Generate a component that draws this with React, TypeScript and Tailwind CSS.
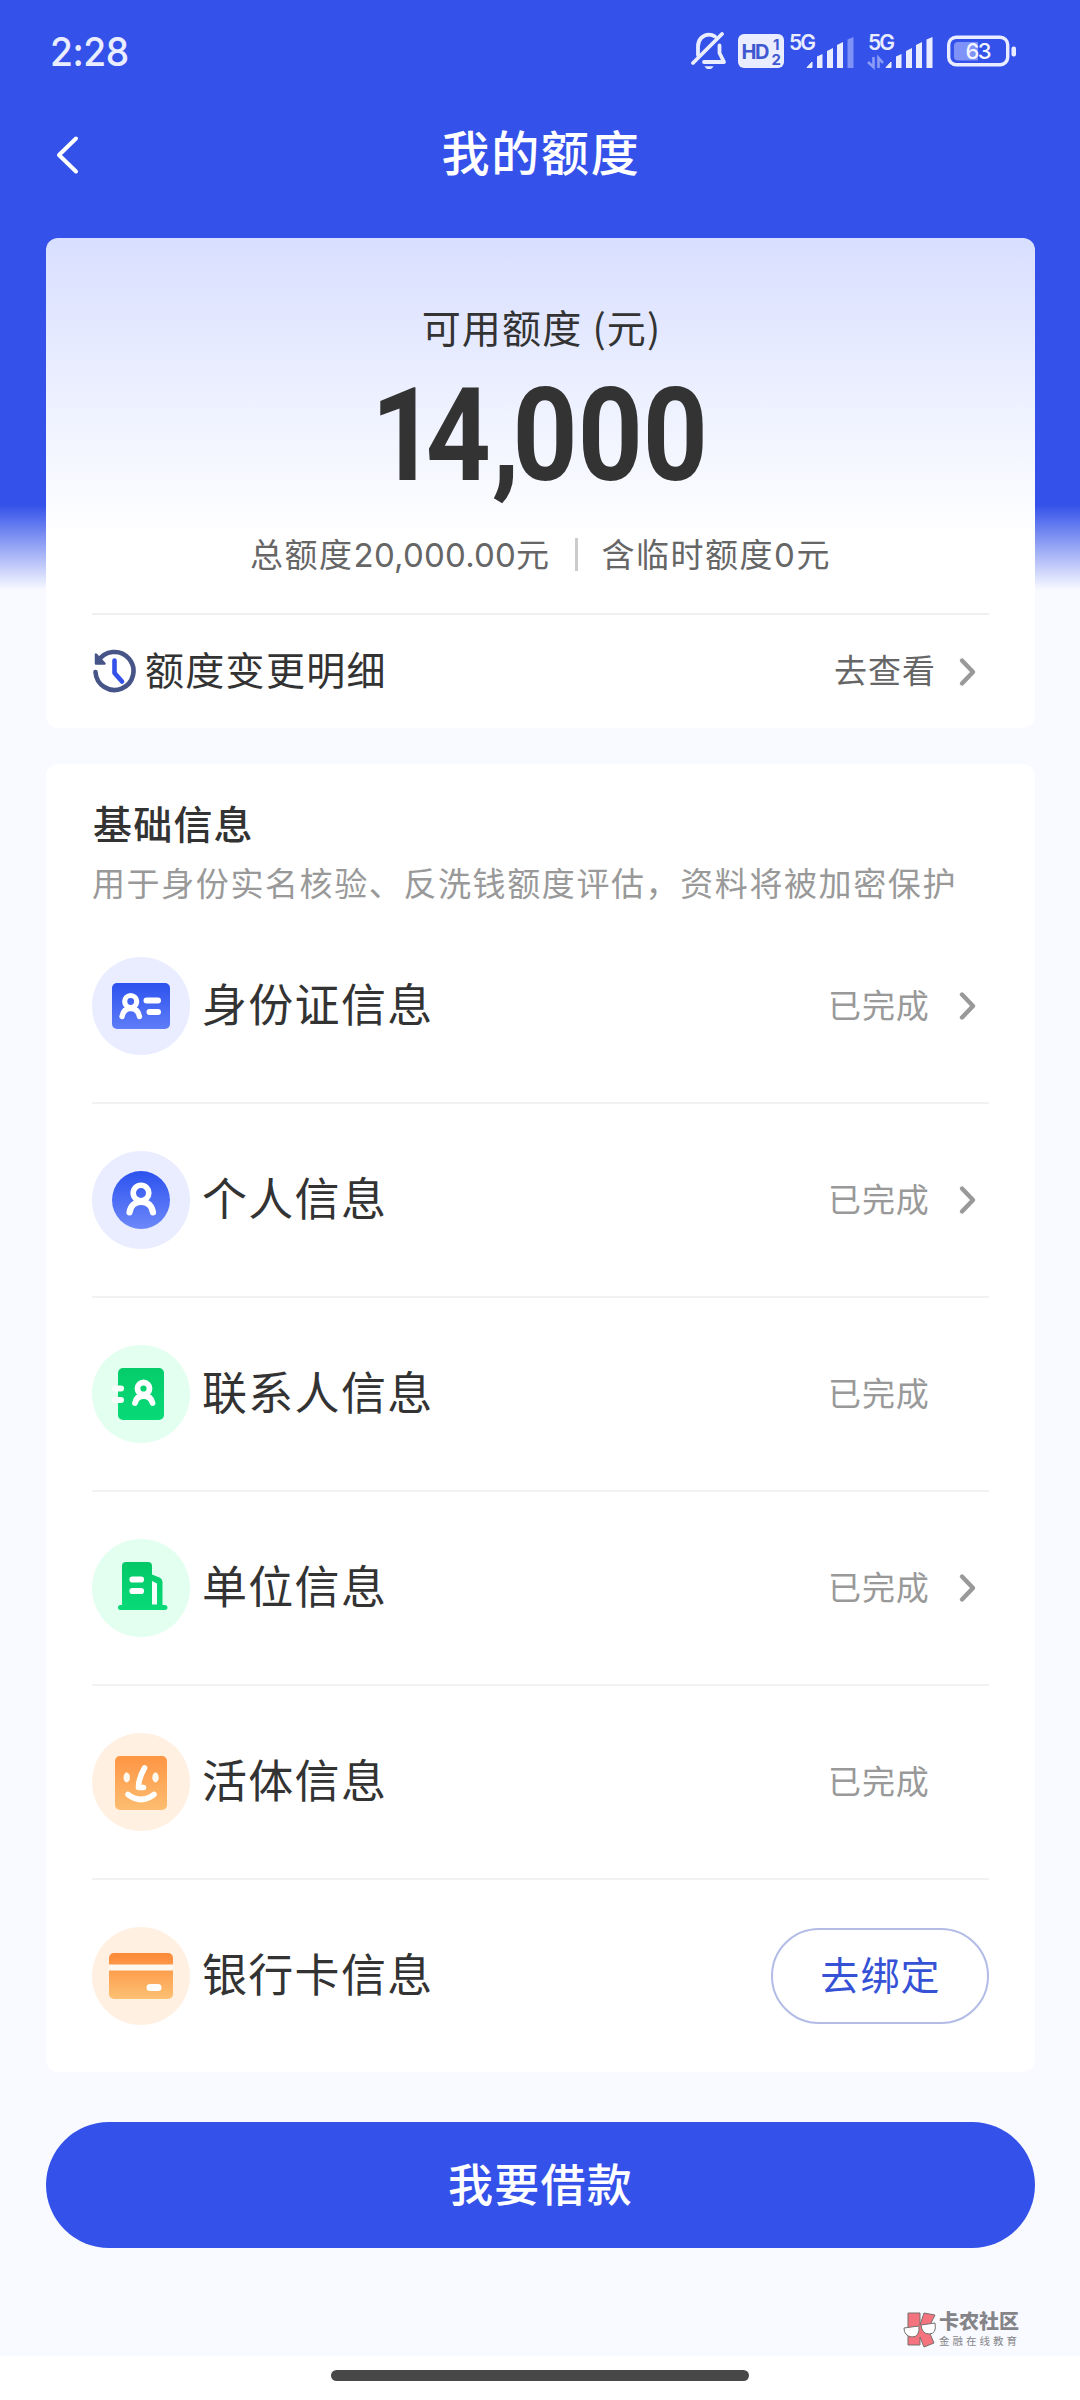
import type { ReactNode } from 'react';

type InfoItem = {
  label: string;
  icon: ReactNode;
  tint: string;
  arrow?: boolean;
  action?: string;
};

function MutedBell() {
  return (
    <svg width="36" height="38" viewBox="0 0 36 38" fill="none" stroke="#e9edff" strokeWidth="3.8" strokeLinecap="round" strokeLinejoin="round">
      <path d="M7 23V14.5C7 7.500 12 2.600 18 2.600C20.300 2.600 22.300 3.300 24 4.500" />
      <path d="M28.500 13.500V21L33 30H13" />
      <path d="M31 2L2 31" />
      <path d="M13.500 34.200H22.500C21.500 36.300 20 37 18 37C16 37 14.500 36.300 13.500 34.200Z" fill="#e9edff" stroke="none" />
    </svg>
  );
}

function Signal({ dimLast = false, arrows = false }: { dimLast?: boolean; arrows?: boolean }) {
  return (
    <svg className="overflow-visible" width="67" height="36" viewBox="0 0 67 36" fill="#e9edff">
      <text x="0" y="16.500" fontFamily="Inter, sans-serif" fontSize="21" fontWeight="600" textLength="27">5G</text>
      {arrows && (
        <g stroke="#8b9cf6" strokeWidth="2.600" fill="none">
          <path d="M5.500 24V34L0 29" />
          <path d="M10.500 35V25L15 30" />
        </g>
      )}
      <path d="M18 34.500L23 29V34.500Z" stroke="#e9edff" strokeLinejoin="round" />
      <path d="M28 35V23.500L33.500 21V35Z" />
      <path d="M38 35V18L44 15V35Z" />
      <path d="M48 35V12L54 9V35Z" />
      <path d="M58.500 35V6.500L64.500 4V35Z" fill={dimLast ? '#7f92f7' : '#e9edff'} />
    </svg>
  );
}

function StatusBar() {
  return (
    <div className="flex h-[102px] items-center justify-between pr-[63px] pl-[50px] text-[#e9edff]">
      <span className="origin-left scale-x-[0.93] pt-[1px] font-['Inter'] text-[40px] leading-none font-medium tracking-[-0.5px]">2:28</span>
      <div className="flex items-center">
        <MutedBell />
        <svg className="ml-[11px]" width="46" height="34" viewBox="0 0 46 34">
          <rect width="46" height="34" rx="6" fill="#e9edff" />
          <g fill="#4058cf" fontFamily="Inter, sans-serif" fontWeight="700">
            <text x="3.500" y="24.500" fontSize="20" textLength="28">HD</text>
            <text x="35" y="15.500" fontSize="15">1</text>
            <text x="33.500" y="30.500" fontSize="15">2</text>
          </g>
        </svg>
        <div className="ml-[5px]"><Signal dimLast /></div>
        <div className="ml-[12px]"><Signal arrows /></div>
        <svg className="ml-[12px]" width="70" height="32" viewBox="0 0 70 32">
          <rect x="1.700" y="2.200" width="59" height="27.500" rx="7.500" fill="none" stroke="#e9edff" strokeWidth="3.400" />
          <path d="M11 7H31V25.500H11Q7 25.500 7 21.500V11Q7 7 11 7Z" fill="#7f92f7" />
          <rect x="64.500" y="11.500" width="4.500" height="10" rx="2" fill="#e9edff" />
          <text x="31.500" y="23.500" textAnchor="middle" fill="#f3f5ff" fontFamily="Inter, sans-serif" fontSize="22" fontWeight="500" textLength="26">63</text>
        </svg>
      </div>
    </div>
  );
}

function Chevron() {
  return (
    <svg width="20" height="32" viewBox="0 0 20 32" fill="none">
      <path d="M4 4.500L15 16L4 27.500" stroke="#999999" strokeWidth="4.400" strokeLinecap="round" strokeLinejoin="round" />
    </svg>
  );
}

function HistoryIcon() {
  return (
    <svg width="44" height="46" viewBox="0 0 44 46" fill="none" strokeLinecap="round" strokeLinejoin="round">
      <path d="M6 12.500A19 19 0 1 1 3.500 23" stroke="#465488" strokeWidth="4.600" />
      <path d="M4 5.500V14.500H12.500Z" fill="#465488" stroke="#465488" strokeWidth="2.500" />
      <path d="M22.500 11.500V24L30 32.500" stroke="#3452ea" strokeWidth="4.600" />
    </svg>
  );
}

function Gradient({ id, from, to }: { id: string; from: string; to: string }) {
  return (
    <linearGradient id={id} x1="0" y1="0" x2="0" y2="1">
      <stop offset="0" stopColor={from} />
      <stop offset="1" stopColor={to} />
    </linearGradient>
  );
}

function IdCardIcon() {
  return (
    <svg width="98" height="98" viewBox="0 0 98 98" fill="none" strokeLinecap="round">
      <Gradient id="idCard" from="#2c52ee" to="#5f7df8" />
      <rect x="20" y="26" width="58" height="46" rx="5" fill="url(#idCard)" />
      <circle cx="38.700" cy="44.500" r="6" stroke="#fff" strokeWidth="5.200" />
      <path d="M30 59.500C31 54 34 51.500 38.700 51.500C43.500 51.500 46.500 54 47.500 59.500" stroke="#fff" strokeWidth="5.400" />
      <path d="M54.500 43.500H66M57.500 55H66" stroke="#fff" strokeWidth="6" />
    </svg>
  );
}

function PersonIcon() {
  return (
    <svg width="98" height="98" viewBox="0 0 98 98" fill="none" strokeLinecap="round">
      <Gradient id="person" from="#2c52ee" to="#6d88fa" />
      <circle cx="49" cy="49" r="29" fill="url(#person)" />
      <circle cx="49" cy="42" r="7.800" stroke="#fff" strokeWidth="5.600" />
      <path d="M37.500 61.500C38.500 54.500 43 51 49 51C55.500 51 60 54.500 61 61.500" stroke="#fff" strokeWidth="6.200" />
    </svg>
  );
}

function ContactIcon() {
  return (
    <svg width="98" height="98" viewBox="0 0 98 98" fill="none" strokeLinecap="round">
      <Gradient id="contact" from="#05cc6a" to="#08da78" />
      <rect x="26" y="23" width="46" height="52" rx="5" fill="url(#contact)" />
      <path d="M22.500 43.500H29M22.500 55H29" stroke="#f8fffb" strokeWidth="6" />
      <circle cx="51.500" cy="43.500" r="6" stroke="#fff" strokeWidth="5.800" />
      <path d="M43 58C44 53 47 51 51.500 51C56.500 51 59.500 53 60.500 58" stroke="#fff" strokeWidth="5.800" />
    </svg>
  );
}

function CompanyIcon() {
  return (
    <svg width="98" height="98" viewBox="0 0 98 98" fill="none" strokeLinecap="round">
      <Gradient id="company" from="#05c868" to="#08da78" />
      <path d="M30 66V27Q30 23 34 23H56Q60 23 60 27V35.500L67.500 38.500Q70.500 40 70.500 43.500V66H72.500Q75.500 66 75.500 68.500Q75.500 71 72.500 71H28.500Q26 71 26 68.500Q26 66 28.500 66H30Z" fill="url(#company)" />
      <path d="M60 42L65 44.500V65.500H60Z" fill="#f4fff9" />
      <path d="M40.500 40.500H49M40.500 52H49" stroke="#fff" strokeWidth="6.200" />
    </svg>
  );
}

function FaceIcon() {
  return (
    <svg width="98" height="98" viewBox="0 0 98 98" fill="none" strokeLinecap="round" strokeLinejoin="round">
      <Gradient id="face" from="#fd9544" to="#fdbd70" />
      <rect x="23" y="23" width="52" height="54" rx="5" fill="url(#face)" />
      <ellipse cx="34.700" cy="44.500" rx="3.200" ry="5" fill="#fff8ef" />
      <ellipse cx="63.500" cy="44.500" rx="3.200" ry="5" fill="#fff8ef" />
      <path d="M52.500 35C49 41 46.500 47.500 46.500 54.500H51.500" stroke="#fff" strokeWidth="5.600" />
      <path d="M36 61.500Q49 71.500 62 61.500" stroke="#fff" strokeWidth="5.600" />
    </svg>
  );
}

function BankCardIcon() {
  return (
    <svg width="98" height="98" viewBox="0 0 98 98" fill="none">
      <Gradient id="bank" from="#fd8938" to="#fdc173" />
      <rect x="17" y="26" width="64" height="46" rx="5" fill="url(#bank)" />
      <rect x="17" y="37.500" width="64" height="6" fill="#fff8ef" />
      <rect x="54.500" y="57" width="15" height="7" rx="3.500" fill="#fff" />
    </svg>
  );
}

const items: InfoItem[] = [
  { label: '身份证信息', icon: <IdCardIcon />, tint: 'bg-[#e9edff]', arrow: true },
  { label: '个人信息', icon: <PersonIcon />, tint: 'bg-[#e9edff]', arrow: true },
  { label: '联系人信息', icon: <ContactIcon />, tint: 'bg-[#e2fff0]' },
  { label: '单位信息', icon: <CompanyIcon />, tint: 'bg-[#e2fff0]', arrow: true },
  { label: '活体信息', icon: <FaceIcon />, tint: 'bg-[#fff0e1]' },
  { label: '银行卡信息', icon: <BankCardIcon />, tint: 'bg-[#fff0e1]', action: '去绑定' },
];

function InfoRow({ item }: { item: InfoItem }) {
  return (
    <div className="flex h-[194px] items-center border-b-2 border-[#f2f2f4] last:h-[192px] last:border-b-0">
      <div className={`h-[98px] w-[98px] rounded-full ${item.tint}`}>{item.icon}</div>
      <span className="ml-[12px] pb-[8px] text-[45px] leading-none tracking-[1.3px] text-[#333]">{item.label}</span>
      {item.action ? (
        <button className="ml-auto h-[96px] w-[218px] rounded-full border-2 border-[#b2bce6] pb-[6px] pl-[1px] text-[39px] leading-none tracking-[1.2px] text-[#3552d6]">
          {item.action}
        </button>
      ) : (
        <div className="ml-auto flex w-[161px] items-center justify-between pr-[11px]">
          <span className="pb-[4px] text-[33px] leading-none tracking-[0.9px] text-[#999]">已完成</span>
          {item.arrow && <Chevron />}
        </div>
      )}
    </div>
  );
}

function Watermark() {
  return (
    <div className="flex items-center gap-[2px] text-[#858589]">
      <svg width="34" height="36" viewBox="0 0 34 36" stroke="#77706f" strokeWidth="1">
        <path d="M5 1H17V13L21 1L32 3L25 17L31 31L21 35L17 25V33H5Z" fill="#f4737f" />
        <path d="M1 16L16 14Q17 25 9 25Q1 24 1 16Z" fill="#fff" />
        <path d="M18 13L32 11Q34 22 26 22Q19 22 18 13Z" fill="#fff" />
      </svg>
      <div className="flex flex-col">
        <span className="text-[20px] leading-[20px] font-black">卡农社区</span>
        <span className="mt-[3px] text-[10.500px] leading-[14px] tracking-[3px] whitespace-nowrap">金融在线教育</span>
      </div>
    </div>
  );
}

export default function App() {
  return (
    <div className="flex h-[2400px] w-[1080px] flex-col bg-[#f9faff] bg-[linear-gradient(#3452ea_0px,#3452ea_505px,#f9faff_590px)] font-['Noto_Sans_CJK_SC',sans-serif]">
      <StatusBar />

      <header className="grid h-[136px] grid-cols-[1fr_auto_1fr] items-start px-[54px] pt-[24px]">
        <svg className="mt-[2px]" width="28" height="54" viewBox="0 0 28 54" fill="none">
          <path d="M22 10.500L5 27L22 43.500" stroke="#fff" strokeWidth="4" strokeLinecap="round" strokeLinejoin="round" />
        </svg>
        <h1 className="pl-[2px] text-[48px] leading-[48px] font-medium tracking-[1.800px] text-white">我的额度</h1>
      </header>

      {/* Available credit */}
      <section className="mr-[45px] ml-[46px] flex h-[490px] flex-col rounded-[12px] bg-[linear-gradient(#d8dfff_0px,#fff_300px)] px-[46px]">
        <p className="mt-[68px] pl-[2px] text-center text-[39px] leading-[40px] tracking-[1.200px] text-[#333]">可用额度 (元)</p>
        <div className="mt-[24px] flex h-[130px] items-center justify-center">
          <span className="origin-center scale-x-[0.88] pr-[2px] font-['Roboto'] text-[129px] leading-none font-bold text-[#333]">
            <span className="tracking-[-12px]">1</span>
            <span className="tracking-[1px]">4</span>
            <span className="tracking-[-8px]">,</span>000
          </span>
        </div>
        <div className="mt-[36px] flex h-[40px] items-center justify-center pb-[4px] text-[33px] leading-none tracking-[1.500px] text-[#666]">
          <span>总额度<span className="font-['Inter'] tracking-[0.2px]">20,000.00</span>元</span>
          <span className="mx-[24px] h-[33px] w-[3px] bg-[#ccc]" />
          <span>含临时额度<span className="font-['Inter']">0</span>元</span>
        </div>
        <div className="mt-[37px] flex h-[115px] items-center border-t-2 border-[#f0f0f2]">
          <HistoryIcon />
          <span className="ml-[9px] pb-[6px] text-[39px] leading-none tracking-[1.300px] text-[#333]">额度变更明细</span>
          <span className="ml-auto pb-[4px] text-[33px] leading-none tracking-[1px] text-[#666]">去查看</span>
          <div className="mr-[11px] ml-[22px]"><Chevron /></div>
        </div>
      </section>

      {/* Basic info */}
      <section className="mt-[36px] mr-[45px] ml-[46px] h-[1308px] rounded-[12px] bg-white px-[46px] pt-[38px]">
        <h2 className="pl-[1px] text-[39px] leading-[40px] font-medium tracking-[1.200px] text-[#333]">基础信息</h2>
        <p className="mt-[22px] text-[33px] leading-[36px] tracking-[1.600px] whitespace-nowrap text-[#999]">
          用于身份实名核验、反洗钱额度评估，资料将被加密保护
        </p>
        <div className="mt-[10px]">
          {items.map((item) => (
            <InfoRow key={item.label} item={item} />
          ))}
        </div>
      </section>

      <button className="mt-[50px] mr-[45px] ml-[46px] h-[126px] rounded-full bg-[#3452ea] pb-[6px] text-[45px] leading-none font-medium tracking-[1.200px] text-white">
        我要借款
      </button>

      <div className="mt-[63px] flex h-[45px] items-start justify-end pr-[60px]">
        <Watermark />
      </div>

      <footer className="flex flex-1 justify-center bg-white pt-[14px]">
        <div className="h-[11px] w-[418px] rounded-full bg-[#484848]" />
      </footer>
    </div>
  );
}
